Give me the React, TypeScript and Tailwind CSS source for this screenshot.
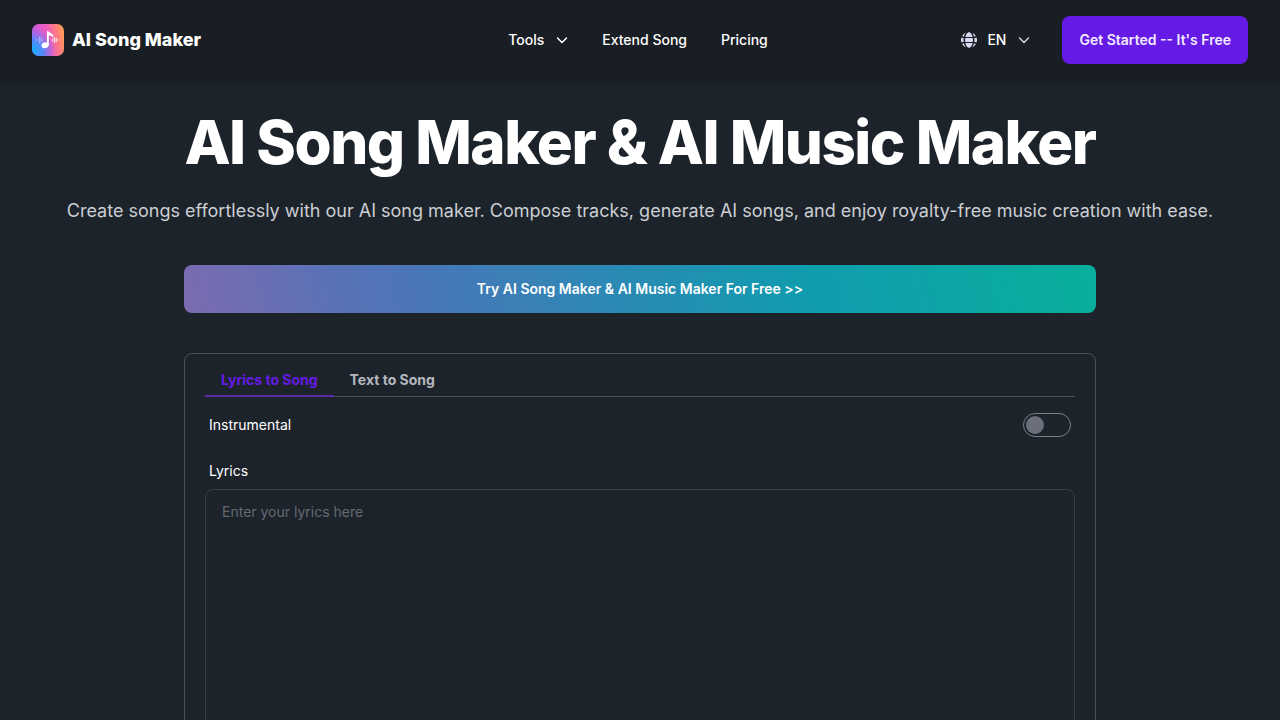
import React, { useState } from 'react';
import clsx from 'clsx';

const TABS = ['Lyrics to Song', 'Text to Song'];

const Logo: React.FC = () => (
  <svg viewBox="0 0 32 32" className="size-8" aria-hidden="true">
    <defs>
      <linearGradient id="logo-base" x1="0" y1="0.2" x2="1" y2="0">
        <stop offset="0" stopColor="#c65ae0" />
        <stop offset="0.45" stopColor="#f05cc0" />
        <stop offset="0.75" stopColor="#ff7f7a" />
        <stop offset="1" stopColor="#ffa64a" />
      </linearGradient>
      <radialGradient id="logo-blue" cx="0" cy="0.85" r="0.75">
        <stop offset="0" stopColor="#0cb4ff" />
        <stop offset="0.5" stopColor="#4a8cff" stopOpacity="0.85" />
        <stop offset="1" stopColor="#8a6cf5" stopOpacity="0" />
      </radialGradient>
    </defs>
    <rect width="32" height="32" rx="7" fill="url(#logo-base)" />
    <rect width="32" height="32" rx="7" fill="url(#logo-blue)" />
    <g stroke="#fff" strokeLinecap="round" fill="none">
      <path strokeWidth="1" opacity="0.5" d="M4.500 16h1.500M7.800 13v6M9.800 14.500v3M25.800 16h1.500" />
      <path strokeWidth="1.200" opacity="0.8" d="M20.500 15.200v1.600M22.500 13.500v5M24.300 14.700v2.600" />
    </g>
    <ellipse cx="13" cy="21.300" rx="3.600" ry="2.900" transform="rotate(-15 13 21.300)" fill="#fff" />
    <path fill="#fff" d="M15 21.500V6.800c1.600.4 2.800 1.700 4.400 2.700 1.700 1 2.400 2 2 3.900-1-1.300-2.500-1.800-4.600-1.900V21.500z" />
  </svg>
);

const Chevron: React.FC<{ className?: string }> = ({ className }) => (
  <svg
    viewBox="0 0 12 12"
    className={clsx('size-3', className)}
    fill="none"
    stroke="currentColor"
    strokeWidth="1.500"
    aria-hidden="true"
  >
    <path strokeLinecap="round" strokeLinejoin="round" d="M1.500 4 6 8.500 10.500 4" />
  </svg>
);

const GlobeIcon: React.FC = () => (
  <svg viewBox="0 0 16 16" className="size-4" fill="currentColor" aria-hidden="true">
    <path d="M8 0C6.100.7 4.800 2.500 4.400 5h7.200C11.200 2.500 9.900.7 8 0zM4.200 6.100h7.600a15 15 0 0 1 0 3.800H4.200a15 15 0 0 1 0-3.800zM4.400 11h7.200c-.4 2.500-1.700 4.300-3.600 5-1.900-.7-3.200-2.500-3.600-5z" />
    <path d="M4.900.6A8 8 0 0 0 1.100 4l1.900.7C3.300 3 4 1.600 4.900.6zM11.100.6A8 8 0 0 1 14.900 4l-1.900.7C12.700 3 12 1.600 11.100.6zM.4 5.600l2.300.6a16 16 0 0 0 0 3.600l-2.300.6a8 8 0 0 1 0-4.800zM15.600 5.600l-2.300.6a16 16 0 0 1 0 3.600l2.300.6a8 8 0 0 0 0-4.800zM4.900 15.400A8 8 0 0 1 1.100 12l1.900-.7c.3 1.700 1 3.100 1.900 4.100zM11.100 15.400a8 8 0 0 0 3.800-3.400l-1.900-.7c-.3 1.700-1 3.100-1.900 4.100z" />
  </svg>
);

const Header: React.FC = () => (
  <header className="bg-[#191e24] shadow-sm">
    <div className="flex h-20 items-center justify-between px-8">
      <div className="flex flex-1">
        <a href="#" className="flex items-center gap-2 text-lg font-extrabold text-white">
          <Logo />
          AI Song Maker
        </a>
      </div>

      <nav className="flex items-center gap-[34px] pr-1 text-sm font-medium">
        <button type="button" className="flex items-center gap-3">
          Tools
          <Chevron />
        </button>
        <a href="#extend">Extend Song</a>
        <a href="#pricing">Pricing</a>
      </nav>

      <div className="flex flex-1 items-center justify-end gap-8 text-sm">
        <button type="button" className="flex items-center gap-3 font-medium">
          <span className="flex items-center gap-2.5">
            <span className="text-[#d9d9f3]">
              <GlobeIcon />
            </span>
            EN
          </span>
          <Chevron className="text-gray-300" />
        </button>
        <a
          href="#start"
          className="flex h-12 items-center rounded-lg bg-[#661ae6] px-[17px] font-semibold text-[#f3eaff]"
        >
          Get Started -- It's Free
        </a>
      </div>
    </div>
  </header>
);

const SongForm: React.FC = () => {
  const [activeTab, setActiveTab] = useState(TABS[0]);
  const [instrumental, setInstrumental] = useState(false);

  return (
    <form className="w-full rounded-lg border border-[#4b5058] px-5 pt-[11px] pb-5 text-sm">
      <div role="tablist" className="flex border-b border-[#4b5058]">
        {TABS.map((tab) => (
          <button
            key={tab}
            type="button"
            role="tab"
            aria-selected={tab === activeTab}
            onClick={() => setActiveTab(tab)}
            className={clsx(
              '-mb-px h-8 border-b-2 px-4 font-bold',
              tab === activeTab ? 'border-[#5a2ba8] text-[#661ae6]' : 'border-transparent text-[#b4b8bf]'
            )}
          >
            {tab}
          </button>
        ))}
      </div>

      <div className="mt-4 flex items-center justify-between px-1">
        <label htmlFor="instrumental">Instrumental</label>
        <input
          id="instrumental"
          type="checkbox"
          role="switch"
          checked={instrumental}
          onChange={(e) => setInstrumental(e.target.checked)}
          className="h-6 w-12 appearance-none rounded-full border border-[#7b7f8a] p-0.5 before:block before:size-[18px] before:rounded-full before:bg-[#6b6f7b] checked:before:ml-auto checked:before:bg-[#661ae6]"
        />
      </div>

      <label htmlFor="lyrics" className="mt-6 block px-1">
        Lyrics
      </label>
      <textarea
        id="lyrics"
        placeholder="Enter your lyrics here"
        className="mt-2 block h-80 w-full resize-none rounded-lg border border-[#383e47] bg-transparent px-4 py-3 placeholder:text-[#646972]"
      />
    </form>
  );
};

const App: React.FC = () => (
  <div className="min-h-screen bg-[#1d232a] font-['Inter',sans-serif] text-white">
    <Header />
    <main className="flex flex-col items-center px-8 pt-8 pb-16">
      <h1 className="text-center text-6xl font-extrabold tracking-tight">AI Song Maker &amp; AI Music Maker</h1>
      <p className="mt-[25px] text-center text-lg text-[#cbced3]">
        Create songs effortlessly with our AI song maker. Compose tracks, generate AI songs, and enjoy royalty-free
        music creation with ease.
      </p>
      <div className="mt-10 flex w-full max-w-[912px] flex-col gap-10">
        <a
          href="#try"
          className="flex h-12 items-center justify-center rounded-lg bg-[linear-gradient(75deg,#7c6bb0_0%,#5872b7_18%,#4a76b9_26%,#2a8ab4_48%,#109cae_68%,#0aaf9c_100%)] text-sm font-semibold"
        >
          Try AI Song Maker &amp; AI Music Maker For Free &gt;&gt;
        </a>
        <SongForm />
      </div>
    </main>
  </div>
);

export default App;
